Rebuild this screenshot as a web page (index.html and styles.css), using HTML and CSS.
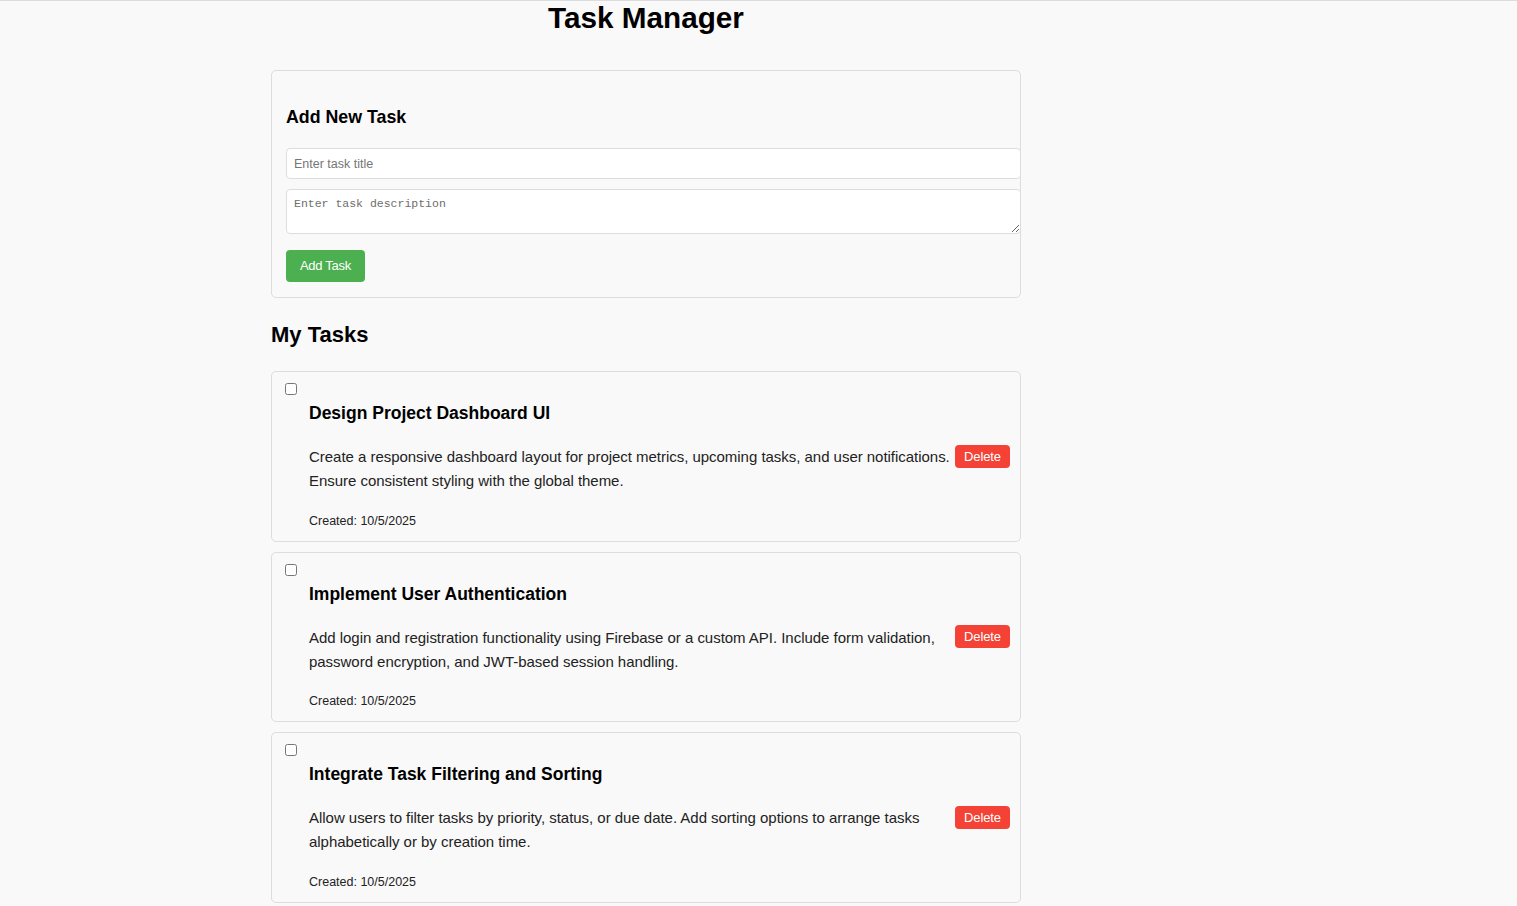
FILE: index.html
```html
<!DOCTYPE html>
<html lang="en">
<head>
<meta charset="utf-8">
<title>Task Manager</title>
<link rel="stylesheet" href="styles.css">
</head>
<body>
<div class="app">
  <h1 class="app-title">Task Manager</h1>

  <form class="task-form">
    <h3 class="form-title">Add New Task</h3>
    <input class="field field-input" type="text" placeholder="Enter task title">
    <textarea class="field field-textarea" placeholder="Enter task description"></textarea>
    <button type="button" class="btn btn-add">Add Task</button>
  </form>

  <h2 class="section-title">My Tasks</h2>

  <ul class="task-list">
    <li class="task">
      <input type="checkbox" class="task-check">
      <div class="task-body">
        <h3 class="task-title">Design Project Dashboard UI</h3>
        <p class="task-desc">Create a responsive dashboard layout for project metrics, upcoming tasks, and user notifications. Ensure consistent styling with the global theme.</p>
        <p class="task-date">Created: 10/5/2025</p>
      </div>
      <button type="button" class="btn btn-delete">Delete</button>
    </li>
    <li class="task">
      <input type="checkbox" class="task-check">
      <div class="task-body">
        <h3 class="task-title">Implement User Authentication</h3>
        <p class="task-desc">Add login and registration functionality using Firebase or a custom API. Include form validation, password encryption, and JWT-based session handling.</p>
        <p class="task-date">Created: 10/5/2025</p>
      </div>
      <button type="button" class="btn btn-delete">Delete</button>
    </li>
    <li class="task">
      <input type="checkbox" class="task-check">
      <div class="task-body">
        <h3 class="task-title">Integrate Task Filtering and Sorting</h3>
        <p class="task-desc">Allow users to filter tasks by priority, status, or due date. Add sorting options to arrange tasks alphabetically or by creation time.</p>
        <p class="task-date">Created: 10/5/2025</p>
      </div>
      <button type="button" class="btn btn-delete">Delete</button>
    </li>
  </ul>
</div>
</body>
</html>
```

FILE: styles.css
```css
* {
  box-sizing: content-box;
}

html {
  background: #f9f9f9;
}

body {
  margin: 0;
  border-top: 1px solid #dcdcdc;
  background: #f9f9f9;
  font-family: "Liberation Sans", Arial, sans-serif;
  color: #000;
}

.app {
  width: 750px;
  margin: 0 0 0 271px;
}

.app-title {
  margin: 0 0 36px;
  font-size: 29.7px;
  line-height: 33px;
  font-weight: bold;
  text-align: center;
  color: #000;
}

.task-form {
  border: 1px solid #dddddd;
  border-radius: 5px;
  padding: 15px 15px 15px 14px;
  margin: 0;
}

.form-title {
  margin: 21px 0;
  font-size: 17.8px;
  line-height: 20px;
  font-weight: bold;
}

.field {
  display: block;
  width: 100%;
  border: 1px solid #dddddd;
  border-radius: 4px;
  background: #fff;
  color: #222;
  outline: none;
}

.field::placeholder {
  color: #767676;
}

.field-input {
  padding: 7px;
  height: 15px;
  margin: 0 0 10px;
  font-family: "Liberation Sans", Arial, sans-serif;
  font-size: 12.5px;
}

.field-textarea {
  padding: 7px;
  height: 29px;
  margin: 0 0 16px;
  font-family: "Liberation Mono", "DejaVu Sans Mono", monospace;
  font-size: 11.5px;
  line-height: 14px;
}

.field-textarea::placeholder {
  color: #6e6e6e;
}

.btn {
  border: none;
  border-radius: 4px;
  color: #fff;
  font-family: "Liberation Sans", Arial, sans-serif;
  cursor: pointer;
}

.btn-add {
  display: block;
  background: #4caf50;
  padding: 8px 14px;
  font-size: 13px;
  line-height: 16px;
  letter-spacing: -0.3px;
}

.section-title {
  margin: 24px 0 24px;
  font-size: 22px;
  line-height: 25px;
  font-weight: bold;
}

.task-list {
  list-style: none;
  margin: 0;
  padding: 0;
}

.task {
  display: flex;
  align-items: center;
  border: 1px solid #dddddd;
  border-radius: 5px;
  padding: 10px;
  margin: 0 0 10px;
}

.task-check {
  align-self: flex-start;
  width: 12px;
  height: 12px;
  margin: 1px 4px 3px 3px;
  flex: none;
}

.task-body {
  flex: 1;
  margin-left: 8px;
}

.task-title {
  margin: 21px 0 22px;
  font-size: 17.5px;
  line-height: 20px;
  font-weight: bold;
}

.task-desc {
  margin: 0 0 20.5px;
  font-size: 15px;
  line-height: 24px;
  letter-spacing: -0.03px;
  color: #222;
}

.task-date {
  margin: 0 0 3px;
  font-size: 12.5px;
  line-height: 14px;
  color: #222;
}

.btn-delete {
  flex: none;
  margin-left: 1px;
  background: #f44336;
  padding: 4px 9px;
  font-size: 13px;
  line-height: 15px;
  letter-spacing: -0.1px;
}
```
